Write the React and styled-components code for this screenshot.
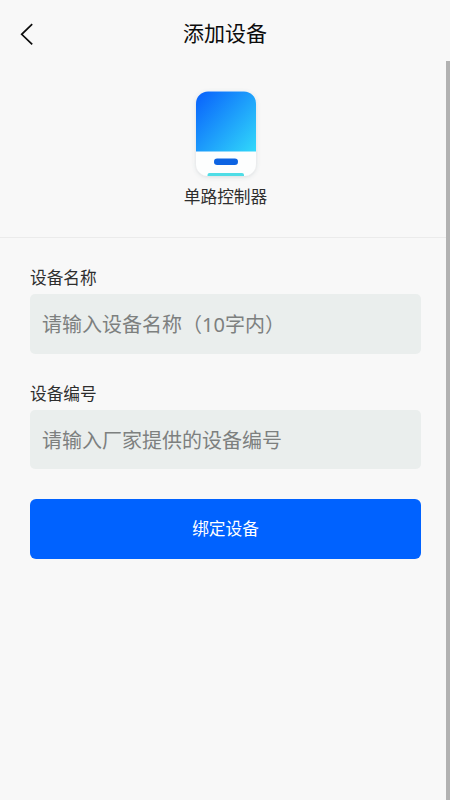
import React, { useState } from 'react';
import styled, { createGlobalStyle } from 'styled-components';

const GlobalStyle = createGlobalStyle`
  * {
    box-sizing: border-box;
  }

  body {
    margin: 0;
    background: #f8f8f8;
    font-family: 'Noto Sans CJK SC', sans-serif;
    overflow: hidden;
  }
`;

const Page = styled.div`
  height: 800px;
  display: flex;
  flex-direction: column;
  background: #f8f8f8;
`;

const Header = styled.header`
  height: 61px;
  padding: 6px 20px 0;
  display: grid;
  grid-template-columns: 30px 1fr 30px;
  align-items: start;
`;

const BackButton = styled.button`
  display: flex;
  padding: 16px 0 0;
  border: none;
  background: none;
  cursor: pointer;
`;

const Title = styled.h1`
  margin: 0;
  color: #0c0c0c;
  text-align: center;
  font-size: 21px;
  font-weight: 400;
  line-height: 52px;
`;

const Body = styled.div`
  flex: 1;
  display: flex;
`;

const Content = styled.main`
  flex: 1;
`;

const ScrollThumb = styled.div`
  width: 4px;
  background: #b2b2b2;
`;

const Device = styled.section`
  height: 177px;
  padding: 25px 0 0 5px;
  display: flex;
  flex-direction: column;
  align-items: center;
  border-bottom: 1px solid #ebebeb;
`;

const DeviceName = styled.div`
  color: #2e2e2e;
  font-size: 16.7px;
  line-height: 24px;
`;

const Form = styled.form`
  padding: 27px 25px 0 30px;
`;

const Field = styled.div`
  margin-bottom: 27px;
`;

const Label = styled.label`
  display: block;
  margin-bottom: 4px;
  color: #2e2e2e;
  font-size: 16.7px;
  line-height: 25px;
`;

const Input = styled.input`
  display: block;
  width: 100%;
  height: 59.5px;
  padding: 2px 12px 0;
  border: none;
  border-radius: 5px;
  outline: none;
  background: #eaeeed;
  color: #2e2e2e;
  font-family: 'Noto Sans', 'Noto Sans CJK SC', sans-serif;
  font-size: 20px;

  &::placeholder {
    color: #7d807f;
    opacity: 1;
  }
`;

const SubmitButton = styled.button`
  display: block;
  width: 100%;
  height: 60px;
  margin-top: 30px;
  padding: 0 0 2px;
  border: none;
  border-radius: 6px;
  background: #0062ff;
  color: #fff;
  font-family: inherit;
  font-size: 16.7px;
  cursor: pointer;
`;

const BackIcon = () => (
  <svg width="16" height="24" viewBox="0 0 16 24" fill="none">
    <path d="M12.2 2.2L1.7 12.3L12.2 22.4" stroke="#0c0c0c" strokeWidth="1.7" />
  </svg>
);

const DeviceIcon = () => (
  <svg width="76" height="98" viewBox="0 0 76 98">
    <defs>
      <linearGradient id="screen" x1="0.05" y1="0.1" x2="1" y2="0.95">
        <stop offset="0" stopColor="#0b68fc" />
        <stop offset="1" stopColor="#30d6fa" />
      </linearGradient>
      <clipPath id="shell">
        <rect x="8" y="5.5" width="60" height="84.5" rx="12" />
      </clipPath>
      <filter id="shadow" x="-20%" y="-20%" width="140%" height="140%">
        <feDropShadow dx="0" dy="1" stdDeviation="2" floodColor="#536a76" floodOpacity="0.2" />
      </filter>
    </defs>
    <rect x="8" y="5.5" width="60" height="84.5" rx="12" fill="#fdfefe" filter="url(#shadow)" />
    <g clipPath="url(#shell)">
      <rect x="8" y="5" width="60" height="60.5" fill="url(#screen)" />
      <path d="M19.5 90V89Q19.5 87 21.5 87H54Q56 87 56 89V90Z" fill="#4fdde6" />
    </g>
    <rect x="26" y="72.5" width="24" height="6.5" rx="3.2" fill="#0c63e2" />
  </svg>
);

function AddDevice() {
  const [name, setName] = useState('');
  const [code, setCode] = useState('');

  const handleSubmit = (e) => {
    e.preventDefault();
  };

  return (
    <Page>
      <GlobalStyle />
      <Header>
        <BackButton aria-label="返回">
          <BackIcon />
        </BackButton>
        <Title>添加设备</Title>
      </Header>
      <Body>
        <Content>
          <Device>
            <DeviceIcon />
            <DeviceName>单路控制器</DeviceName>
          </Device>
          <Form onSubmit={handleSubmit}>
            <Field>
              <Label htmlFor="name">设备名称</Label>
              <Input
                id="name"
                placeholder="请输入设备名称（10字内）"
                maxLength={10}
                value={name}
                onChange={(e) => setName(e.target.value)}
              />
            </Field>
            <Field>
              <Label htmlFor="code">设备编号</Label>
              <Input
                id="code"
                placeholder="请输入厂家提供的设备编号"
                value={code}
                onChange={(e) => setCode(e.target.value)}
              />
            </Field>
            <SubmitButton type="submit">绑定设备</SubmitButton>
          </Form>
        </Content>
        <ScrollThumb />
      </Body>
    </Page>
  );
}

export default AddDevice;
